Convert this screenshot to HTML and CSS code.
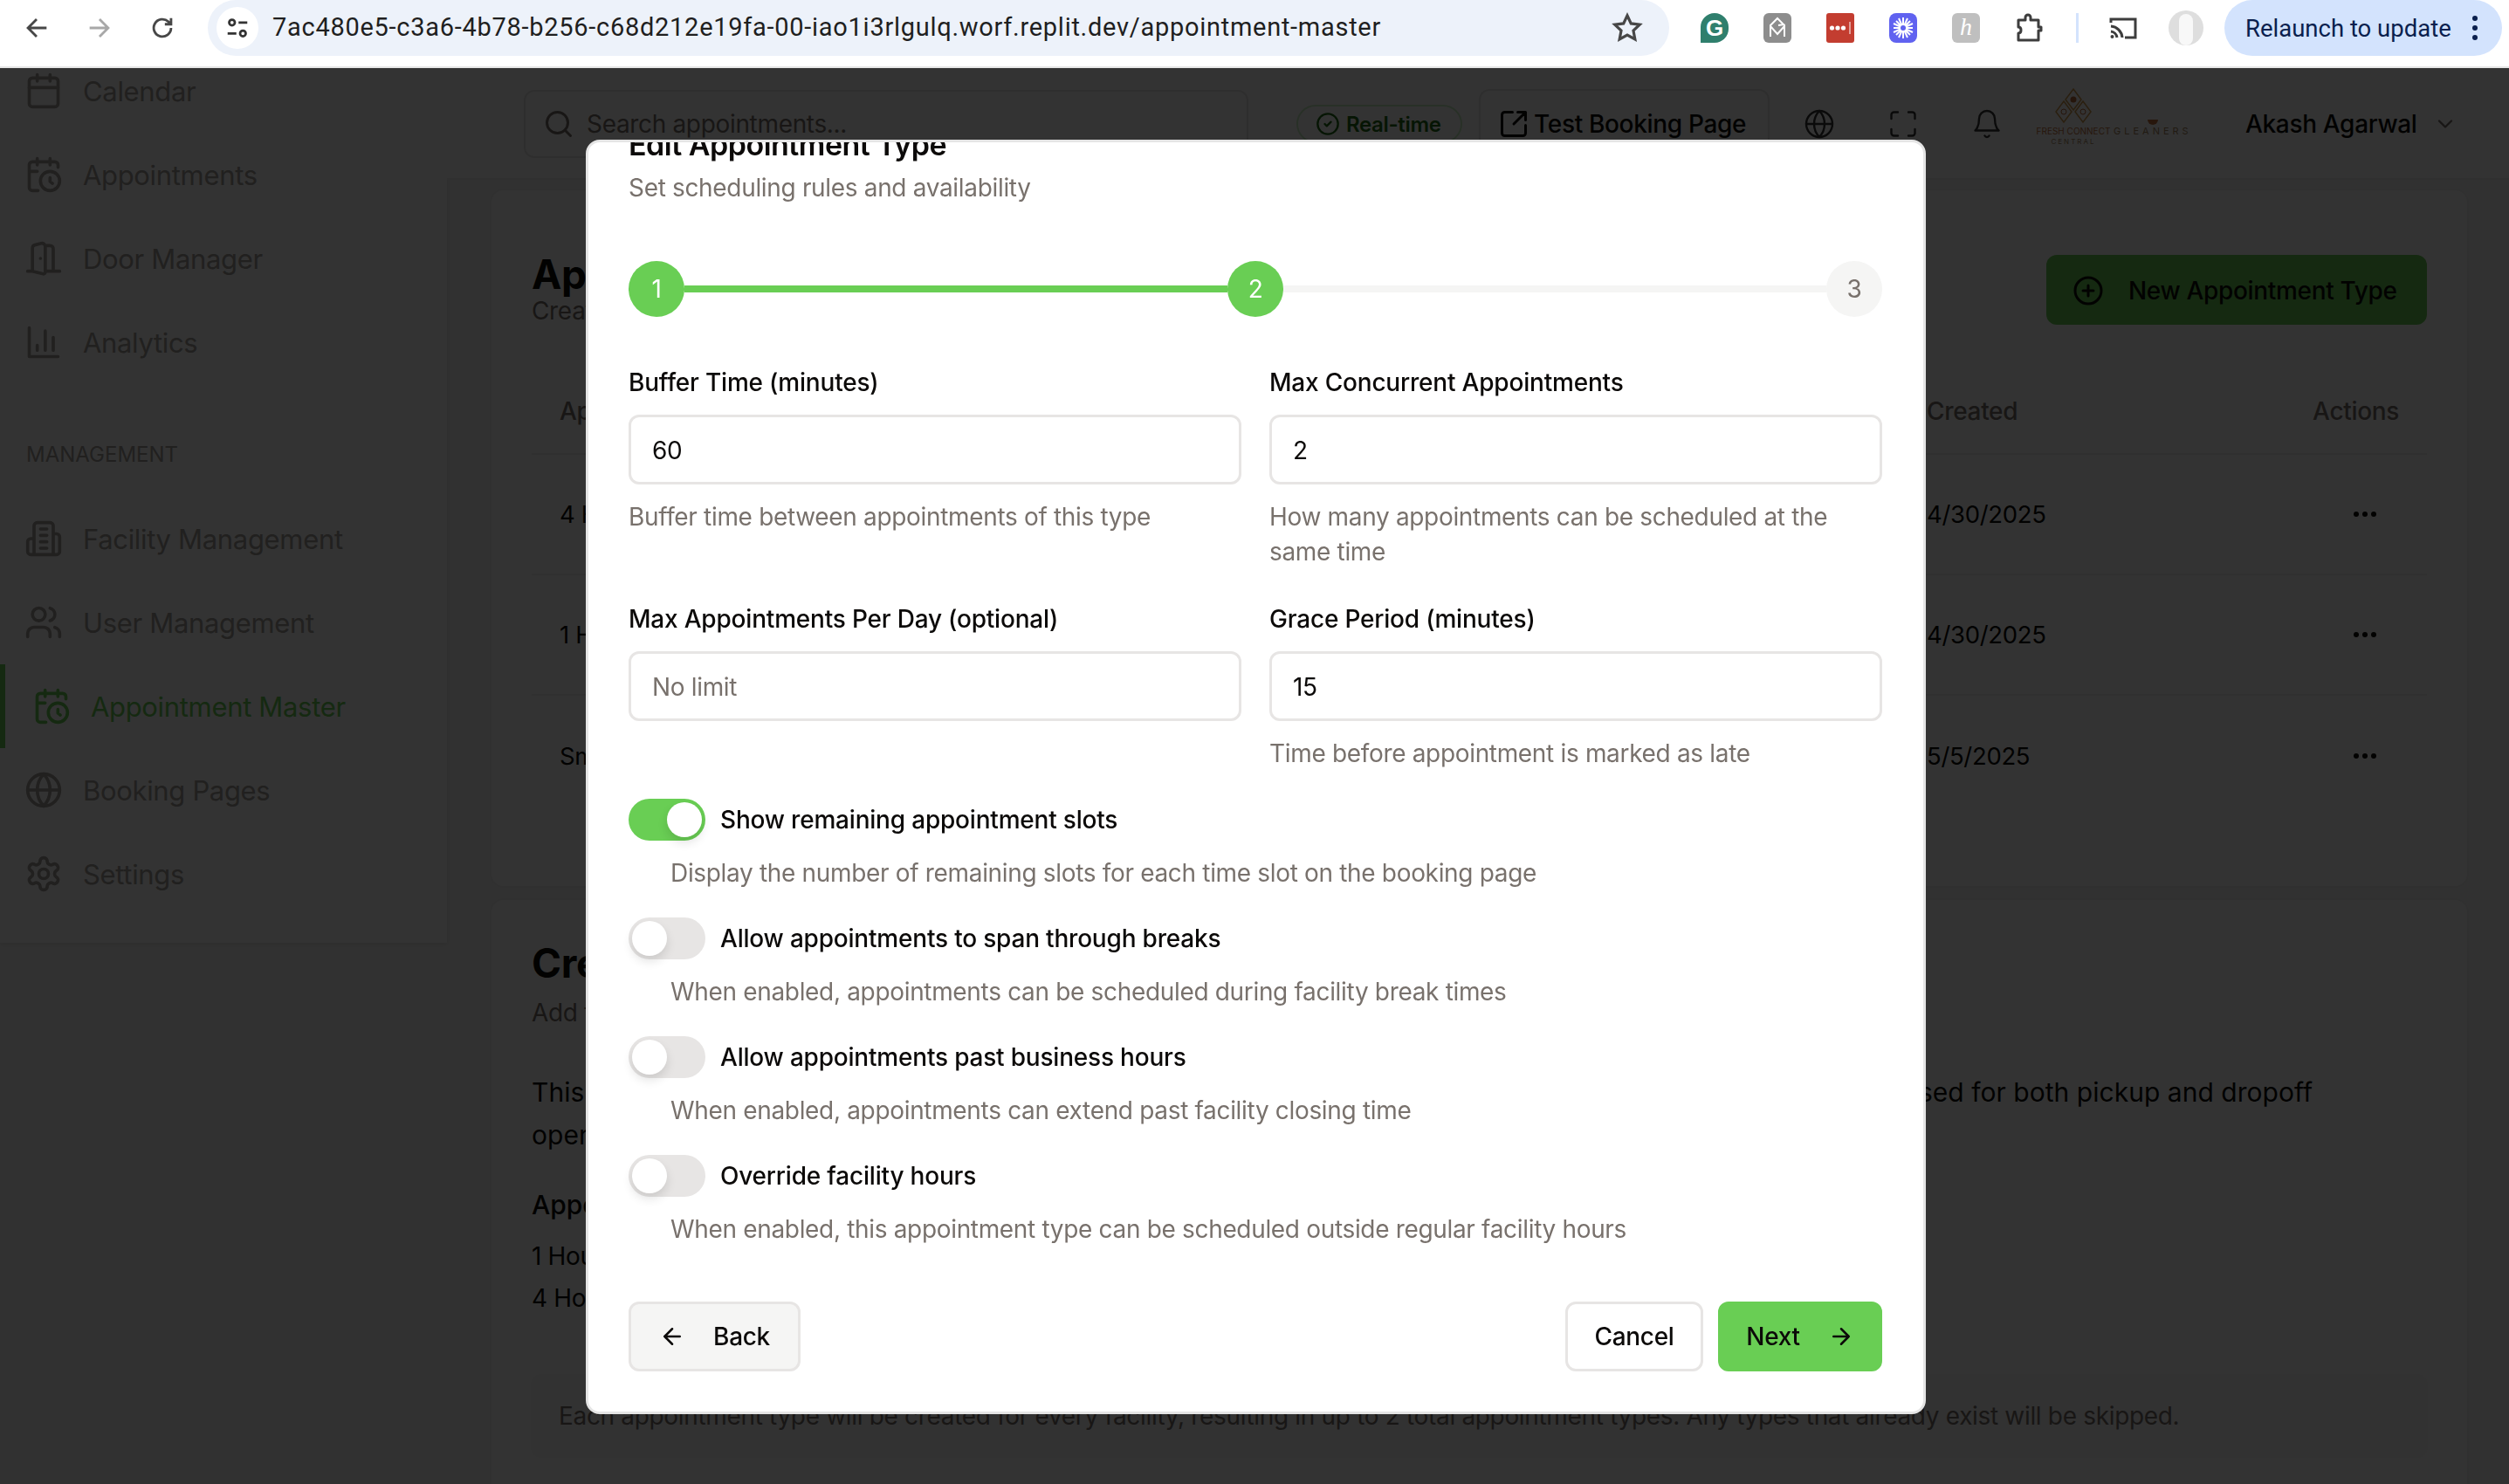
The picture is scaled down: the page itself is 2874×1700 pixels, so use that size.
FILE: index.html
```html
<!DOCTYPE html>
<html lang="en">

<head>
    <meta charset="UTF-8">
    <title>Appointment Master</title>
    <link rel="stylesheet" href="styles.css">
</head>

<body>
    <!-- browser toolbar -->
    <header class="toolbar">
        <div class="tool"><svg class="ti" viewBox="0 0 24 24"><path d="M20 12H5M12 5l-7 7 7 7"/></svg></div>
        <div class="tool tool-off"><svg class="ti" viewBox="0 0 24 24"><path d="M4 12h15M12 5l7 7-7 7"/></svg></div>
        <div class="tool"><svg class="ti" viewBox="0 0 24 24"><path d="M19 12a7 7 0 1 1-2.2-5.1L19 9M19 4v5h-5"/></svg></div>
        <div class="url-pill">
            <span class="site-btn"><svg class="ti ti-sm" viewBox="0 0 24 24"><circle cx="7" cy="7" r="2.6"/><path d="M13 7h8M3 17h8"/><circle cx="17" cy="17" r="2.6"/></svg></span>
            <span class="url-text">7ac480e5-c3a6-4b78-b256-c68d212e19fa-00-iao1i3rlgulq.worf.replit.dev/appointment-master</span>
            <svg class="ti star" viewBox="0 0 24 24"><path d="M12 3l2.7 5.8 6.3.8-4.6 4.3 1.2 6.3-5.6-3.1-5.6 3.1 1.2-6.3L3 9.6l6.3-.8z"/></svg>
        </div>
        <div class="ext"><span class="ext-g">G</span></div>
        <div class="ext"><svg class="ext-svg" viewBox="0 0 32 34"><rect width="32" height="34" rx="6" fill="#8d8d8d"/><path d="M8 27V14l8-8 7 7-6 1M8 15l8 9 8-9v12" fill="none" stroke="#fff" stroke-width="2"/></svg></div>
        <div class="ext"><svg class="ext-svg" viewBox="0 0 32 34"><rect width="32" height="34" rx="3" fill="#c33d30"/><circle cx="6.500" cy="17" r="2.600" fill="#fff"/><circle cx="13" cy="17" r="2.600" fill="#fff"/><circle cx="19.500" cy="17" r="2.600" fill="#fff"/><path d="M27 10v14" stroke="#fff"/></svg></div>
        <div class="ext"><svg class="ext-svg" viewBox="0 0 32 34"><rect width="32" height="34" rx="8" fill="#6062f0"/><path d="M16 5v24M5 17h22M8 9l16 16M24 9L8 25M11 6l10 22M21 6L11 28M5 12l22 10M27 12L5 22" stroke="#fff" stroke-width="2"/><circle cx="16" cy="17" r="3" fill="#6062f0"/></svg></div>
        <div class="ext"><span class="ext-h">h</span></div>
        <div class="ext"><svg class="ext-svg" viewBox="0 0 32 34"><path d="M4 8h8V5a3 3 0 0 1 6 0v3h9v8h3v4h-3v11H4v-8c4 0 4-7 0-7z" fill="none" stroke="#3d3d3d" stroke-width="3" stroke-linejoin="round"/></svg></div>
        <div class="ext-sep"></div>
        <div class="ext"><svg class="ext-svg" viewBox="0 0 32 34"><path d="M2 11V7h28v21H18M2 15a14 14 0 0 1 13 13M2 21a8 8 0 0 1 7 7" fill="none" stroke="#3d3d3d" stroke-width="3"/><circle cx="3.500" cy="27" r="2" fill="#3d3d3d"/></svg></div>
        <div class="ext"><span class="avatar"><span class="avatar-face"></span></span></div>
        <div class="relaunch">
            <span>Relaunch to update</span>
            <span class="kebab"><i></i><i></i><i></i></span>
        </div>
    </header>

    <div class="app">
        <aside class="sidebar">
            <nav class="nav">
                <a class="nav-item"><svg class="ni" viewBox="0 0 24 24"><rect x="3" y="4" width="18" height="18" rx="2"/><path d="M16 2v4M8 2v4M3 10h18"/></svg>Calendar</a>
                <a class="nav-item"><svg class="ni" viewBox="0 0 24 24"><path d="M21 7.500V6a2 2 0 0 0-2-2H5a2 2 0 0 0-2 2v14a2 2 0 0 0 2 2h3.500M16 2v4M8 2v4M3 10h5M17.500 17.500L16 16.300V14"/><circle cx="16" cy="16" r="6"/></svg>Appointments</a>
                <a class="nav-item"><svg class="ni" viewBox="0 0 24 24"><path d="M13 4h3a2 2 0 0 1 2 2v14M2 20h3M13 20h9M10 12v.01M13 4.562v16.157a1 1 0 0 1-1.242.97L5 20V5.562a2 2 0 0 1 1.515-1.940l4-1A2 2 0 0 1 13 4.561Z"/></svg>Door Manager</a>
                <a class="nav-item"><svg class="ni" viewBox="0 0 24 24"><path d="M3 3v18h18M18 17V9M13 17V5M8 17v-3"/></svg>Analytics</a>
                <div class="nav-title">MANAGEMENT</div>
                <a class="nav-item"><svg class="ni" viewBox="0 0 24 24"><path d="M6 22V4a2 2 0 0 1 2-2h8a2 2 0 0 1 2 2v18ZM6 12H4a2 2 0 0 0-2 2v6a2 2 0 0 0 2 2h2M18 9h2a2 2 0 0 1 2 2v9a2 2 0 0 1-2 2h-2M10 6h4M10 10h4M10 14h4M10 18h4"/></svg>Facility Management</a>
                <a class="nav-item"><svg class="ni" viewBox="0 0 24 24"><path d="M16 21v-2a4 4 0 0 0-4-4H6a4 4 0 0 0-4 4v2M22 21v-2a4 4 0 0 0-3-3.870M16 3.130a4 4 0 0 1 0 7.750"/><circle cx="9" cy="7" r="4"/></svg>User Management</a>
                <a class="nav-item nav-active"><svg class="ni" viewBox="0 0 24 24"><path d="M21 7.500V6a2 2 0 0 0-2-2H5a2 2 0 0 0-2 2v14a2 2 0 0 0 2 2h3.500M16 2v4M8 2v4M3 10h5M17.500 17.500L16 16.300V14"/><circle cx="16" cy="16" r="6"/></svg>Appointment Master</a>
                <a class="nav-item"><svg class="ni" viewBox="0 0 24 24"><circle cx="12" cy="12" r="10"/><path d="M12 2a14.500 14.500 0 0 0 0 20 14.500 14.500 0 0 0 0-20M2 12h20"/></svg>Booking Pages</a>
                <a class="nav-item"><svg class="ni" viewBox="0 0 24 24"><path d="M12.220 2h-.44a2 2 0 0 0-2 2v.18a2 2 0 0 1-1 1.730l-.43.25a2 2 0 0 1-2 0l-.15-.08a2 2 0 0 0-2.730.73l-.22.38a2 2 0 0 0 .73 2.730l.15.1a2 2 0 0 1 1 1.720v.51a2 2 0 0 1-1 1.740l-.15.09a2 2 0 0 0-.73 2.730l.22.38a2 2 0 0 0 2.730.73l.15-.08a2 2 0 0 1 2 0l.43.25a2 2 0 0 1 1 1.730V20a2 2 0 0 0 2 2h.44a2 2 0 0 0 2-2v-.18a2 2 0 0 1 1-1.730l.43-.25a2 2 0 0 1 2 0l.15.08a2 2 0 0 0 2.730-.73l.22-.39a2 2 0 0 0-.73-2.730l-.15-.08a2 2 0 0 1-1-1.740v-.5a2 2 0 0 1 1-1.740l.15-.09a2 2 0 0 0 .73-2.730l-.22-.38a2 2 0 0 0-2.730-.73l-.15.08a2 2 0 0 1-2 0l-.43-.25a2 2 0 0 1-1-1.730V4a2 2 0 0 0-2-2z"/><circle cx="12" cy="12" r="3"/></svg>Settings</a>
            </nav>
        </aside>

        <main class="main">
            <div class="topbar">
                <div class="search">
                    <svg class="ni ni-sm" viewBox="0 0 24 24"><circle cx="11" cy="11" r="8"/><path d="M21 21l-4.300-4.300"/></svg>
                    <span>Search appointments...</span>
                </div>
                <div class="realtime">
                    <svg class="ni ni-xs" viewBox="0 0 24 24"><circle cx="12" cy="12" r="10"/><path d="M9 12l2 2 4-4"/></svg>
                    Real-time
                </div>
                <div class="test-btn">
                    <svg class="ni ni-sm" viewBox="0 0 24 24"><path d="M21 13v6a2 2 0 0 1-2 2H5a2 2 0 0 1-2-2V5a2 2 0 0 1 2-2h6M15 3h6v6M21 3l-9 9"/></svg>
                    Test Booking Page
                </div>
                <div class="top-icon"><svg class="ni ni-sm" viewBox="0 0 24 24"><circle cx="12" cy="12" r="10"/><path d="M12 2a14.500 14.500 0 0 0 0 20 14.500 14.500 0 0 0 0-20M2 12h20"/></svg></div>
                <div class="top-icon"><svg class="ni ni-sm" viewBox="0 0 24 24"><path d="M8 3H5a2 2 0 0 0-2 2v3M21 8V5a2 2 0 0 0-2-2h-3M3 16v3a2 2 0 0 0 2 2h3M16 21h3a2 2 0 0 0 2-2v-3"/></svg></div>
                <div class="top-icon"><svg class="ni ni-sm" viewBox="0 0 24 24"><path d="M6 8a6 6 0 0 1 12 0c0 7 3 9 3 9H3s3-2 3-9M10.300 21a1.940 1.940 0 0 0 3.400 0"/></svg></div>
                <div class="logo">
                    <div class="logo-left">
                        <svg class="logo-mark" viewBox="0 0 56 42"><g fill="none" stroke="#d09a4e" stroke-width="1.500"><path d="M28 1l9 12-9 12-9-12z"/><path d="M17 15l9 12-9 12-9-12z"/><path d="M39 15l9 12-9 12-9-12z"/></g><circle cx="28" cy="13" r="3.500" fill="#b8683a"/><circle cx="17" cy="27" r="3" fill="none" stroke="#b8683a"/><circle cx="39" cy="27" r="3" fill="none" stroke="#b8683a"/></svg>
                        <span class="logo-fresh">FRESH CONNECT</span>
                        <span class="logo-central">CENTRAL</span>
                    </div>
                    <div class="logo-right">
                        <span class="logo-bowl"></span>
                        <span class="logo-gleaners">GLEANERS</span>
                    </div>
                </div>
                <div class="user">Akash Agarwal</div>
                <svg class="ni ni-xs user-chev" viewBox="0 0 24 24"><path d="M6 9l6 6 6-6"/></svg>
            </div>

            <div class="content">
                <section class="card card-types">
                    <div class="types-head">
                        <div>
                            <h1 class="page-title">Appointment Master</h1>
                            <p class="muted">Create and manage appointment types</p>
                        </div>
                        <div class="new-btn">
                            <svg class="ni ni-sm" viewBox="0 0 24 24"><circle cx="12" cy="12" r="10"/><path d="M8 12h8M12 8v8"/></svg>
                            New Appointment Type
                        </div>
                    </div>
                    <div class="t-row t-head"><span>Appointment Type</span><span>Created</span><span class="t-actions">Actions</span></div>
                    <div class="t-row"><span>4 Hour Container Appointment</span><span>4/30/2025</span><span class="t-dots"><i></i><i></i><i></i></span></div>
                    <div class="t-row"><span>1 Hour Trailer Appointment</span><span>4/30/2025</span><span class="t-dots"><i></i><i></i><i></i></span></div>
                    <div class="t-row t-last"><span>Small Truck Appointment</span><span>5/5/2025</span><span class="t-dots"><i></i><i></i><i></i></span></div>
                </section>

                <section class="card card-create">
                    <h2 class="page-title">Create Standard Appointment Types</h2>
                    <p class="muted">Add the standard appointment types to every facility</p>
                    <p class="body-text">This will create the standard appointment types for all of the facilities in your organizations, which can then be used for both pickup and dropoff<br>operations.</p>
                    <h3 class="sub-title">Appointment types to be created</h3>
                    <p class="list-line">1 Hour Trailer Appointment</p>
                    <p class="list-line list-line-2">4 Hour Container Appointment</p>
                    <p class="note">Each appointment type will be created for every facility, resulting in up to 2 total appointment types. Any types that already exist will be skipped.</p>
                </section>
            </div>
        </main>
    </div>

    <!-- dim layer and dialog -->
    <div class="overlay">
        <div class="modal">
            <h2 class="modal-title">Edit Appointment Type</h2>
            <p class="modal-sub">Set scheduling rules and availability</p>

            <div class="stepper">
                <span class="step step-on">1</span>
                <span class="step-line step-line-on"></span>
                <span class="step step-on">2</span>
                <span class="step-line"></span>
                <span class="step">3</span>
            </div>

            <div class="fields">
                <div class="field">
                    <label class="label">Buffer Time (minutes)</label>
                    <div class="input">60</div>
                    <p class="help">Buffer time between appointments of this type</p>
                </div>
                <div class="field">
                    <label class="label">Max Concurrent Appointments</label>
                    <div class="input">2</div>
                    <p class="help">How many appointments can be scheduled at the same time</p>
                </div>
                <div class="field">
                    <label class="label">Max Appointments Per Day (optional)</label>
                    <div class="input input-empty">No limit</div>
                </div>
                <div class="field">
                    <label class="label">Grace Period (minutes)</label>
                    <div class="input">15</div>
                    <p class="help">Time before appointment is marked as late</p>
                </div>
            </div>

            <div class="switches">
                <div class="switch-row">
                    <div class="switch-line"><span class="switch switch-on"><i></i></span><span class="label">Show remaining appointment slots</span></div>
                    <p class="help switch-help">Display the number of remaining slots for each time slot on the booking page</p>
                </div>
                <div class="switch-row">
                    <div class="switch-line"><span class="switch"><i></i></span><span class="label">Allow appointments to span through breaks</span></div>
                    <p class="help switch-help">When enabled, appointments can be scheduled during facility break times</p>
                </div>
                <div class="switch-row">
                    <div class="switch-line"><span class="switch"><i></i></span><span class="label">Allow appointments past business hours</span></div>
                    <p class="help switch-help">When enabled, appointments can extend past facility closing time</p>
                </div>
                <div class="switch-row">
                    <div class="switch-line"><span class="switch"><i></i></span><span class="label">Override facility hours</span></div>
                    <p class="help switch-help">When enabled, this appointment type can be scheduled outside regular facility hours</p>
                </div>
            </div>

            <div class="modal-foot">
                <div class="btn btn-back"><svg class="ni ni-btn" viewBox="0 0 24 24"><path d="M19 12H5M12 19l-7-7 7-7"/></svg>Back</div>
                <div class="foot-right">
                    <div class="btn btn-cancel">Cancel</div>
                    <div class="btn btn-next">Next<svg class="ni ni-btn" viewBox="0 0 24 24"><path d="M5 12h14M12 5l7 7-7 7"/></svg></div>
                </div>
            </div>
        </div>
    </div>
</body>

</html>
```

FILE: styles.css
```css
* {
    box-sizing: border-box;
}

html,
body {
    margin: 0;
    padding: 0;
    height: 1700px;
    overflow: hidden;
}

body {
    font-family: Inter, "Noto Sans", sans-serif;
    font-size: 28px;
    letter-spacing: -.33px;
    color: #0c0a09;
    background: #f6f6f5;
}

p,
h1,
h2,
h3 {
    margin: 0;
}

/* browser toolbar */
.toolbar {
    display: flex;
    align-items: flex-start;
    height: 78px;
    padding-left: 6px;
    background: #fff;
    border-bottom: 2px solid #e6e6e6;
    letter-spacing: 0;
}

.tool {
    display: flex;
    align-items: center;
    justify-content: center;
    width: 72px;
    height: 64px;
}

.ti {
    width: 34px;
    height: 34px;
    fill: none;
    stroke: #474747;
    stroke-width: 2;
}

.ti-sm {
    width: 30px;
    height: 30px;
    stroke: #333;
    stroke-width: 2.200;
}

.tool-off .ti {
    stroke: #a8a8a8;
}

.url-pill {
    display: flex;
    align-items: center;
    width: 1674px;
    height: 64px;
    margin-left: 16px;
    padding-left: 10px;
    background: #edf2fa;
    border-radius: 32px;
}

.site-btn {
    display: flex;
    align-items: center;
    justify-content: center;
    width: 48px;
    height: 48px;
    border-radius: 50%;
    background: #fff;
}

.url-text {
    flex: 1;
    margin-left: 16px;
    padding-bottom: 2px;
    font-family: Roboto, sans-serif;
    font-size: 29px;
    letter-spacing: .72px;
    color: #1f1f1f;
    white-space: nowrap;
}

.star {
    width: 38px;
    height: 38px;
    margin-right: 29px;
}

.ext {
    display: flex;
    align-items: center;
    justify-content: center;
    width: 72px;
    height: 64px;
}

.url-pill + .ext {
    margin-left: 16px;
}

.ext-svg {
    width: 32px;
    height: 34px;
}

.ext-g {
    width: 32px;
    height: 34px;
    border-radius: 16px 16px 16px 0;
    background: #2f7f6d;
    color: #fff;
    font: 700 26px/34px "Liberation Sans", sans-serif;
    text-align: center;
}

.ext-h {
    width: 32px;
    height: 34px;
    border-radius: 6px;
    background: #bfbfbf;
    color: #fff;
    font: italic 400 28px/32px "Liberation Serif", serif;
    text-align: center;
}

.ext-sep {
    width: 3px;
    height: 34px;
    margin: 15px 15px 0 18px;
    background: #d3e3fd;
}

.avatar {
    position: relative;
    width: 40px;
    height: 40px;
    border-radius: 50%;
    background: #dedede;
    overflow: hidden;
}

.avatar-face {
    position: absolute;
    left: 12px;
    top: 4px;
    width: 16px;
    height: 36px;
    border-radius: 8px;
    background: #f8f8f8;
}

.relaunch {
    display: flex;
    align-items: center;
    width: 318px;
    height: 64px;
    margin-left: 8px;
    padding-left: 24px;
    background: #d3e3fd;
    border-radius: 32px;
    color: #0a1f4e;
    font-family: Roboto, sans-serif;
    font-size: 27.500px;
}

.kebab {
    display: flex;
    flex-direction: column;
    gap: 5px;
    margin-left: 24px;
}

.kebab i {
    width: 6px;
    height: 6px;
    border-radius: 50%;
    background: #0a1f4e;
}

/* app behind the dialog */
.app {
    display: flex;
    height: 1622px;
    overflow: hidden;
}

.sidebar {
    flex: none;
    width: 512px;
    height: 1002px;
    background: #fff;
    box-shadow: 0 2px 6px rgba(0, 0, 0, .1);
    overflow: hidden;
}

.nav {
    margin-top: -22px;
}

.nav-item {
    display: flex;
    align-items: center;
    gap: 23px;
    height: 96px;
    padding-left: 28px;
    color: #a39e99;
    font-size: 31px;
}

.nav-title {
    height: 129px;
    padding: 66px 0 0 30px;
    color: #a39e99;
    font-size: 24px;
    line-height: 30px;
    letter-spacing: 0;
}

.nav-active {
    padding-left: 31px;
    border-left: 6px solid #69ce54;
    color: #69ce54;
}

.ni {
    flex: none;
    width: 44px;
    height: 44px;
    fill: none;
    stroke: currentColor;
    stroke-width: 2;
    stroke-linecap: round;
    stroke-linejoin: round;
}

.ni-sm {
    width: 36px;
    height: 36px;
}

.ni-xs {
    width: 28px;
    height: 28px;
}

.main {
    flex: 1;
    min-width: 0;
}

.topbar {
    display: flex;
    align-items: center;
    height: 128px;
    padding: 2px 0 0 88px;
    background: #fff;
    border-bottom: 2px solid #f1f1f0;
}

.search {
    display: flex;
    align-items: center;
    gap: 14px;
    flex: none;
    width: 830px;
    height: 78px;
    padding-left: 20px;
    border: 2px solid #e7e5e4;
    border-radius: 12px;
    color: #78716c;
}

.realtime {
    display: flex;
    align-items: center;
    gap: 7px;
    flex: none;
    width: 190px;
    height: 44px;
    margin-left: 55px;
    padding-left: 20px;
    border: 2px solid #c9eec1;
    border-radius: 22px;
    color: #1f6a14;
    font-size: 24px;
    font-weight: 600;
}

.test-btn {
    display: flex;
    align-items: center;
    gap: 5px;
    flex: none;
    width: 333px;
    height: 80px;
    margin-left: 19px;
    padding-left: 20px;
    border: 2px solid #e7e5e4;
    border-radius: 12px;
    font-size: 28px;
    font-weight: 500;
    white-space: nowrap;
}

.top-icon {
    display: flex;
    justify-content: center;
    flex: none;
    width: 96px;
    color: #333;
}

.top-icon:nth-of-type(4) {
    margin-left: 9px;
}

.top-icon .ni {
    stroke-width: 1.600;
}

.logo {
    display: flex;
    align-items: flex-start;
    flex: none;
    width: 190px;
    height: 70px;
    margin: -12px 0 0 9px;
    color: #c0703c;
    letter-spacing: 0;
}

.logo-left {
    display: flex;
    flex-direction: column;
    align-items: center;
    width: 84px;
}

.logo-mark {
    width: 56px;
    height: 42px;
}

.logo-fresh {
    font-size: 10px;
    line-height: 14px;
    white-space: nowrap;
}

.logo-central {
    font-size: 8px;
    line-height: 10px;
    letter-spacing: 2px;
    color: #a58560;
}

.logo-right {
    display: flex;
    flex-direction: column;
    align-items: center;
    margin: 36px 0 0 4px;
}

.logo-bowl {
    width: 12px;
    height: 6px;
    border-radius: 0 0 6px 6px;
    background: #c0703c;
}

.logo-gleaners {
    font-size: 11px;
    line-height: 14px;
    letter-spacing: 4px;
    color: #a58560;
}

.user {
    flex: none;
    margin-left: 49px;
    font-size: 28px;
    font-weight: 500;
}

.user-chev {
    margin-left: 18px;
    color: #78716c;
}

.content {
    padding: 10px 46px 0 49px;
}

.card {
    background: #fff;
    border: 2px solid #f0efee;
    border-radius: 16px;
    padding: 0 46px;
}

.card-types {
    height: 801px;
    padding-top: 72px;
}

.types-head {
    display: flex;
    justify-content: space-between;
    height: 138px;
}

.page-title {
    font-size: 46px;
    line-height: 48px;
    font-weight: 700;
}

.muted {
    color: #78716c;
    font-size: 28px;
    line-height: 40px;
}

.types-head .muted {
    margin-top: -2px;
}

.new-btn {
    display: flex;
    align-items: center;
    gap: 28px;
    width: 436px;
    height: 80px;
    margin-top: 2px;
    padding: 2px 0 0 30px;
    border-radius: 12px;
    background: #69ce54;
    font-size: 28px;
    font-weight: 500;
}

.t-row {
    display: grid;
    grid-template-columns: 1566px 1fr 130px;
    align-items: center;
    height: 138px;
    padding: 0 32px;
    border-bottom: 2px solid #efeeed;
    font-size: 27.500px;
}

.t-head {
    height: 93px;
    padding-bottom: 5px;
    color: #78716c;
    font-size: 28px;
    font-weight: 500;
}

.t-last {
    border-bottom: 0;
}

.t-actions {
    text-align: right;
}

.t-dots {
    display: flex;
    justify-content: flex-end;
    gap: 4px;
    padding-right: 26px;
}

.t-dots i {
    width: 6px;
    height: 6px;
    border-radius: 50%;
    background: #0c0a09;
}

.card-create {
    height: 700px;
    margin-top: 12px;
    padding-top: 48px;
}

.card-create .muted {
    margin-top: 13px;
}

.body-text {
    margin-top: 47px;
    font-size: 30px;
    line-height: 49px;
    letter-spacing: .03px;
}

.sub-title {
    margin-top: 31px;
    font-size: 30px;
    line-height: 48px;
    font-weight: 500;
    letter-spacing: 0;
}

.list-line {
    margin-top: 16px;
    line-height: 38px;
}

.list-line-2 {
    margin-top: 10px;
}

.note {
    margin: 68px -1px 0;
    padding: 28px 32px;
    background: #f8f8f7;
    border-radius: 12px;
    color: #78716c;
    line-height: 40px;
}

/* dialog */
.overlay {
    position: fixed;
    left: 0;
    top: 78px;
    right: 0;
    bottom: 0;
    background: rgba(0, 0, 0, .8);
}

.modal {
    position: absolute;
    left: 671px;
    top: 82px;
    width: 1535px;
    height: 1460px;
    padding: 0 47px 0 46px;
    overflow: hidden;
    background: #fff;
    border: 3px solid #e5e5e5;
    border-radius: 16px;
}

.modal-title {
    margin-top: -15px;
    font-size: 34px;
    line-height: 36px;
    font-weight: 600;
    letter-spacing: -.5px;
}

.modal-sub {
    margin-top: 11px;
    color: #78716c;
    font-size: 28px;
    line-height: 40px;
}

.stepper {
    display: flex;
    align-items: center;
    margin-top: 64px;
}

.step {
    flex: none;
    width: 64px;
    height: 64px;
    border-radius: 50%;
    background: #f5f5f4;
    color: #78716c;
    font-size: 28px;
    line-height: 64px;
    text-align: center;
}

.step-on {
    background: #69ce54;
    color: #fff;
}

.step-line {
    flex: 1;
    height: 8px;
    background: #f5f5f4;
}

.step-line-on {
    background: #69ce54;
}

.fields {
    display: grid;
    grid-template-columns: 702px 702px;
    column-gap: 32px;
    row-gap: 37px;
    margin-top: 55px;
}

.label {
    display: block;
    font-size: 28px;
    line-height: 40px;
    font-weight: 500;
    letter-spacing: -.2px;
}

.input {
    height: 80px;
    margin-top: 17px;
    padding-left: 24px;
    border: 3px solid #e7e5e4;
    border-radius: 12px;
    line-height: 76px;
}

.input-empty {
    color: #78716c;
}

.help {
    margin-top: 17px;
    color: #78716c;
    font-size: 28px;
    line-height: 40px;
}

.switches {
    margin-top: 32px;
}

.switch-row {
    height: 136px;
}

.switch-line {
    display: flex;
    align-items: center;
    gap: 17px;
}

.switch {
    position: relative;
    flex: none;
    width: 88px;
    height: 48px;
    border-radius: 24px;
    background: #e7e5e4;
}

.switch i {
    position: absolute;
    left: 4px;
    top: 4px;
    width: 40px;
    height: 40px;
    border-radius: 50%;
    background: #fff;
    box-shadow: 0 6px 12px rgba(0, 0, 0, .12);
}

.switch-on {
    background: #69ce54;
}

.switch-on i {
    left: 44px;
}

.switch-help {
    margin-left: 48px;
}

.modal-foot {
    display: flex;
    justify-content: space-between;
    margin-top: 32px;
}

.foot-right {
    display: flex;
    gap: 17px;
}

.btn {
    display: flex;
    align-items: center;
    justify-content: center;
    gap: 32px;
    height: 80px;
    border: 3px solid #e7e5e4;
    border-radius: 12px;
    font-size: 28px;
    font-weight: 500;
}

.btn-back {
    width: 197px;
    background: #f5f5f4;
}

.btn-cancel {
    width: 158px;
}

.btn-next {
    width: 188px;
    background: #69ce54;
    border-color: #69ce54;
}

.ni-btn {
    width: 30px;
    height: 30px;
}
```
